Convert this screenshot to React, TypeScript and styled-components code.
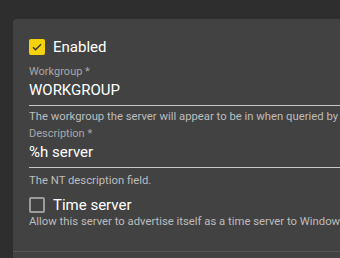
import React from "react";
import styled, { createGlobalStyle } from "styled-components";

const GlobalStyle = createGlobalStyle`
  html, body {
    margin: 0;
    padding: 0;
    background: #2e2e2e;
    overflow: hidden;
  }
  body {
    font-family: Roboto, "Liberation Sans", sans-serif;
  }
`;

interface FieldProps {
  label: string;
  value: string;
  hint: string;
  top: number;
  hintTop: number;
}

const Field = (props: FieldProps) => {
  const { label, value, hint, top, hintTop } = props;
  return (
    <S.Field $top={top}>
      <S.Label>{label}</S.Label>
      <S.Input>{value}</S.Input>
      <S.Hint $top={hintTop}>{hint}</S.Hint>
    </S.Field>
  );
};

const Check = ({ checked }: { checked: boolean }) => (
  <S.Box $checked={checked}>
    {checked && (
      <svg width="12" height="12" viewBox="0 0 24 24">
        <path
          d="M4 12.5l5 5L20 6.5"
          fill="none"
          stroke="#2f2f2f"
          strokeWidth="2.6"
        />
      </svg>
    )}
  </S.Box>
);

const App = () => {
  return (
    <>
      <GlobalStyle />
      <S.Page>
        <S.Card>
          <S.CheckRow>
            <Check checked={true} />
            <S.CheckText>Enabled</S.CheckText>
          </S.CheckRow>
          <Field
            top={10}
            hintTop={4}
            label="Workgroup *"
            value="WORKGROUP"
            hint="The workgroup the server will appear to be in when queried by clients (maximum 15 characters)."
          />
          <Field
            top={3}
            hintTop={6}
            label="Description *"
            value="%h server"
            hint="The NT description field."
          />
          <S.CheckRow $top={9}>
            <Check checked={false} />
            <S.CheckText>Time server</S.CheckText>
          </S.CheckRow>
          <S.Hint $top={2}>
            Allow this server to advertise itself as a time server to Windows clients.
          </S.Hint>
          <S.Footer />
        </S.Card>
      </S.Page>
    </>
  );
};

export default App;

const S = {
  Page: styled.div`
    padding: 19px 0 0 13px;
    width: 340px;
    height: 258px;
    box-sizing: border-box;
    overflow: hidden;
  `,
  Card: styled.div`
    background: #424242;
    border-radius: 4px 0 0 0;
    padding: 20px 0 0 16px;
    height: 260px;
    box-sizing: border-box;
    overflow: hidden;
  `,
  CheckRow: styled.div<{ $top?: number }>`
    display: flex;
    align-items: center;
    gap: 8px;
    height: 16px;
    margin-top: ${(p) => p.$top ?? 0}px;
  `,
  Box: styled.div<{ $checked: boolean }>`
    flex: none;
    width: 16px;
    height: 16px;
    box-sizing: border-box;
    border-radius: 2px;
    display: flex;
    align-items: center;
    justify-content: center;
    background: ${(p) => (p.$checked ? "#f5d10a" : "transparent")};
    border: ${(p) => (p.$checked ? "none" : "2px solid #9c9c9c")};
  `,
  CheckText: styled.span`
    font-size: 15px;
    line-height: 16px;
    color: #ffffff;
    white-space: nowrap;
  `,
  Field: styled.div<{ $top: number }>`
    margin-top: ${(p) => p.$top}px;
  `,
  Label: styled.div`
    font-size: 11px;
    line-height: 14px;
    color: #a8a8a8;
  `,
  Input: styled.div`
    font-size: 15px;
    line-height: 20px;
    color: #ffffff;
    padding: 1px 0 5px;
    border-bottom: 1px solid #c8c8c8;
  `,
  Hint: styled.div<{ $top?: number }>`
    font-size: 11.3px;
    line-height: 14px;
    color: #bdbdbd;
    white-space: nowrap;
    margin-top: ${(p) => p.$top ?? 4}px;
  `,
  Footer: styled.div`
    margin: 22px 0 0 -16px;
    border-top: 1px solid #565656;
  `,
};
